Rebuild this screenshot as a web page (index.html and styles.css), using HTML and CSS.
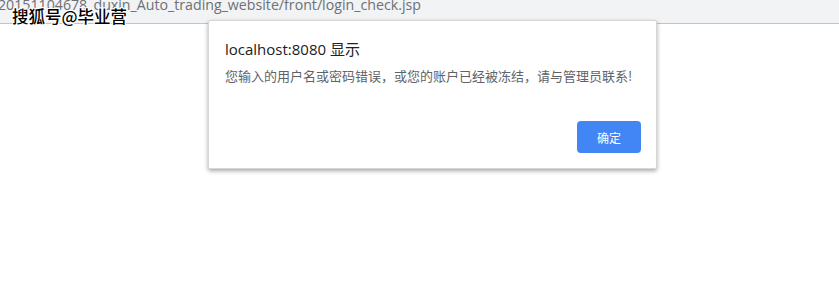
FILE: index.html
```html
<!DOCTYPE html>
<html>
<head>
<meta charset="utf-8">
<link rel="stylesheet" href="styles.css">
</head>
<body>
<div class="toolbar">
  <div class="url">20151104678_duxin_Auto_trading_website/front/login_check.jsp</div>
</div>
<div class="watermark">搜狐号@毕业营</div>
<div class="dialog">
  <div class="title">localhost:8080 显示</div>
  <div class="message">您输入的用户名或密码错误，或您的账户已经被冻结，请与管理员联系!</div>
  <div class="actions"><button class="ok">确定</button></div>
</div>
</body>
</html>
```
FILE: styles.css
```css
html, body {
  margin: 0;
  padding: 0;
  background: #ffffff;
  width: 839px;
  height: 297px;
  overflow: hidden;
  font-family: "Noto Sans", "Noto Sans CJK SC", sans-serif;
}
.toolbar {
  height: 23px;
  background: #f1f3f4;
  border-bottom: 1px solid #c4c4c4;
  overflow: hidden;
}
.url {
  font-family: "Open Sans", sans-serif;
  font-size: 14.2px;
  color: #6d7075;
  line-height: 20px;
  margin-top: -5px;
  margin-left: -2px;
  white-space: nowrap;
}
.watermark {
  position: absolute;
  left: 12px;
  top: 5px;
  font-family: "Noto Sans CJK SC", sans-serif;
  font-size: 16.5px;
  line-height: 22px;
  font-weight: 500;
  color: #000;
  text-shadow: 1px 0 0 #fff, -1px 0 0 #fff, 0 1px 0 #fff, 0 -1px 0 #fff, 1px 1px 0 #fff, -1px -1px 0 #fff, 1px -1px 0 #fff, -1px 1px 0 #fff;
}
.dialog {
  position: absolute;
  left: 208px;
  top: 20px;
  width: 449px;
  height: 149px;
  box-sizing: border-box;
  background: #fff;
  border: 1px solid #d6d6d6;
  border-radius: 2px;
  box-shadow: 0 2px 4px rgba(0,0,0,0.35);
  padding: 17px 15px 15px 16px;
  display: flex;
  flex-direction: column;
}
.title {
  font-family: "Open Sans", "Noto Sans CJK SC", sans-serif;
  font-size: 15px;
  line-height: 22px;
  color: #202124;
}
.message {
  margin-top: 7px;
  font-family: "Noto Sans CJK SC", sans-serif;
  font-size: 13px;
  line-height: 18px;
  color: #5f6368;
}
.actions {
  margin-top: auto;
  display: flex;
  justify-content: flex-end;
}
.ok {
  width: 64px;
  height: 32px;
  border: none;
  border-radius: 4px;
  background: #4285f4;
  color: #fff;
  font-family: "Noto Sans CJK SC", sans-serif;
  font-size: 12px;
  padding: 0;
}
```
